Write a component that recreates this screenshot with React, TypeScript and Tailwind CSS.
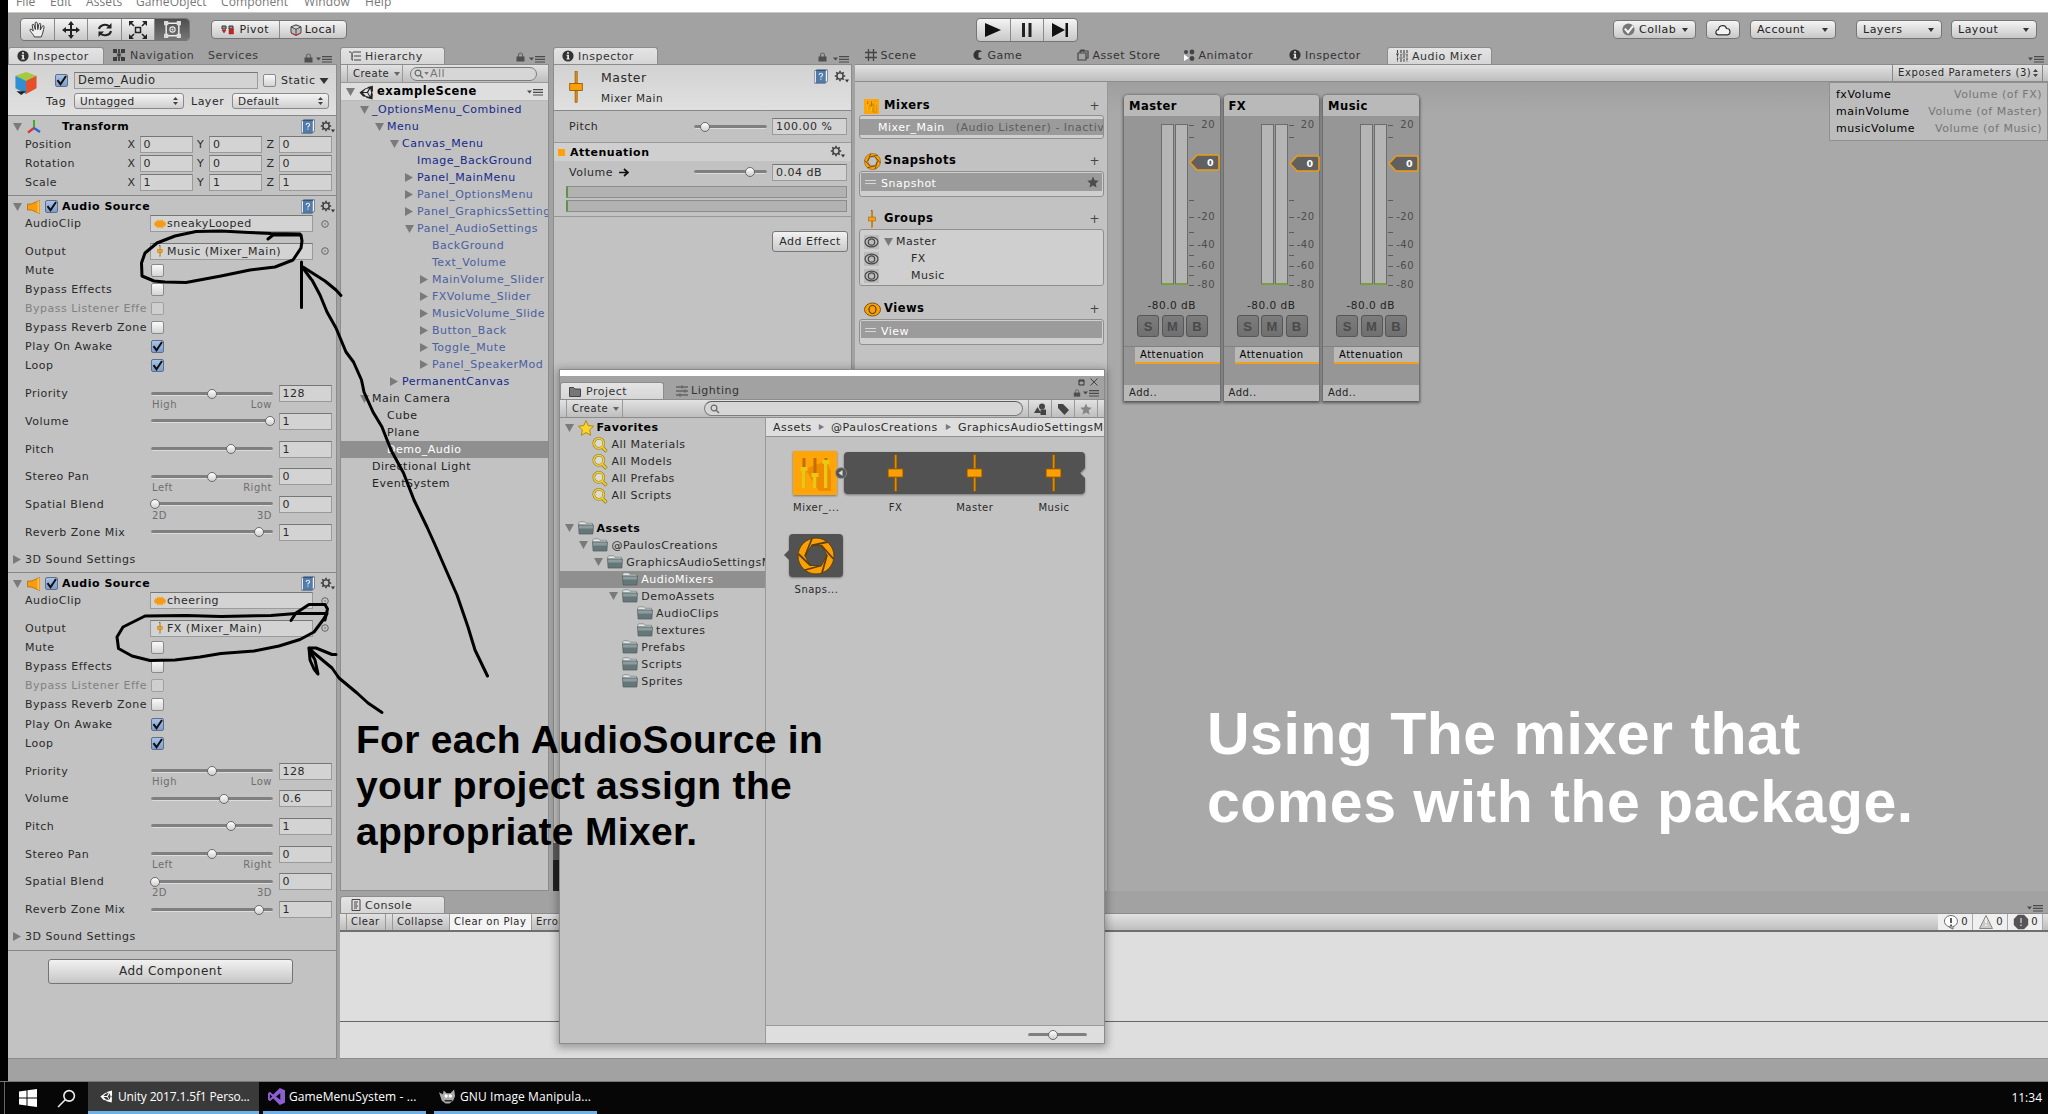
import React from 'react';

type Kids = { children?: React.ReactNode; className?: string };

/* ---------- small shared pieces ---------- */

const Down = ({ className = '' }: { className?: string }) => (
  <svg viewBox="0 0 9 8" className={`h-2 w-[9px] shrink-0 fill-[#7a7a7a] ${className}`}><path d="M0 0h9L4.500 8z" /></svg>
);
const Right = ({ className = '' }: { className?: string }) => (
  <svg viewBox="0 0 8 9" className={`h-[9px] w-2 shrink-0 fill-[#7a7a7a] ${className}`}><path d="M0 0v9l8-4.500z" /></svg>
);
const Caret = ({ className = '' }: { className?: string }) => (
  <svg viewBox="0 0 6 4" className={`h-1 w-1.5 shrink-0 fill-[#333] ${className}`}><path d="M0 0h6L3 4z" /></svg>
);
const UpDown = ({ className = '' }: { className?: string }) => (
  <svg viewBox="0 0 5 8" className={`h-2 w-[5px] shrink-0 fill-[#444] ${className}`}><path d="M0 3h5L2.500 0zM0 5h5L2.500 8z" /></svg>
);
const PaneMenu = ({ className = '' }: { className?: string }) => (
  <svg viewBox="0 0 16 7" className={`h-[7px] w-4 shrink-0 fill-[#4a4a4a] ${className}`}>
    <path d="M0 1.500h5L2.500 4.500zM6 0h10v1.200H6zM6 2.700h10v1.200H6zM6 5.400h10v1.200H6z" />
  </svg>
);
const Lock = ({ className = '' }: { className?: string }) => (
  <svg viewBox="0 0 9 10" className={`h-2.5 w-[9px] shrink-0 ${className}`}>
    <path d="M2.500 5V3a2 2 0 0 1 4 0v2" fill="none" stroke="#666" strokeWidth="1.200" />
    <rect x=".5" y="4.500" width="8" height="5" fill="#4f4f4f" />
  </svg>
);
const Info = ({ className = '' }: { className?: string }) => (
  <svg viewBox="0 0 12 12" className={`size-3 shrink-0 ${className}`}>
    <circle cx="6" cy="6" r="5.600" fill="#333" />
    <path d="M5 2.200h2v1.600H5zM4.500 4.800H7v3.700h.7v1H4.400v-1h.8V5.800h-.7z" fill="#e8e8e8" />
  </svg>
);
const Gear = ({ className = '' }: { className?: string }) => (
  <svg viewBox="0 0 15 14" className={`h-3.5 w-[15px] shrink-0 ${className}`}>
    <circle cx="6" cy="6" r="3.100" fill="none" stroke="#3c3c3c" strokeWidth="1.400" />
    <path d="M6 .8v2M6 9.200v2M.8 6h2M9.200 6h2M2.300 2.300l1.300 1.300M8.400 8.400l1.300 1.300M9.700 2.300L8.400 3.600M2.300 9.700l1.300-1.300" stroke="#3c3c3c" strokeWidth="1.600" />
    <path d="M11 9.500h4l-2 3z" fill="#333" />
  </svg>
);
const Book = ({ className = '' }: { className?: string }) => (
  <svg viewBox="0 0 14 15" className={`h-[15px] w-3.5 shrink-0 ${className}`}>
    <path d="M.5 1.500L3 .5h10.500v12L11 14.500H.5z" fill="#2e4a70" />
    <path d="M11.500 2l1.500-1v11l-1.500 1.500z" fill="#f2f4f7" />
    <path d="M.8 1.700h1.400v12H.8z" fill="#e3e9f0" />
    <path d="M2.200 1.800h9.100v12H2.200z" fill="#547cab" />
    <path d="M5.200 6c0-2.200 3.400-2.200 3.400-.3 0 1.400-1.700 1.300-1.700 2.700M6.900 9.400v1.300" fill="none" stroke="#e4ecf6" strokeWidth="1.100" />
  </svg>
);
const Fader = ({ className = '' }: { className?: string }) => (
  <svg viewBox="0 0 14 32" className={`shrink-0 ${className}`}>
    <rect x="6" y=".5" width="2.200" height="31" fill="#e08c00" stroke="#7a4a00" strokeWidth=".5" />
    <rect x=".7" y="12.500" width="12.600" height="7" fill="#fa9f05" stroke="#8a5200" strokeWidth=".8" />
  </svg>
);
const Folder = ({ className = '' }: { className?: string }) => (
  <svg viewBox="0 0 16 14" className={`h-3.5 w-4 shrink-0 ${className}`}>
    <path d="M.7 4V1.800L2 .8h4.500L8 2.300h6.500v2z" fill="#e2e6e6" stroke="#6d7878" strokeWidth=".7" />
    <path d="M.6 4h14.800l-.5 9H1.100z" fill="#66777a" stroke="#4c5a5c" strokeWidth=".7" />
    <path d="M1 4.500h14l-.2 3H1.200z" fill="#8d9c9e" />
  </svg>
);
const Aperture = ({ className = '', open = '#c2c2c2' }: { className?: string; open?: string }) => (
  <svg viewBox="0 0 38 38" className={`shrink-0 ${className}`}>
    <circle cx="19" cy="19" r="18" fill="#fa9f05" stroke="#5e4010" strokeWidth="1" />
    <path d="M14.500 8.500h10L30 18l-5.500 10.500h-11L8 19z" fill={open} stroke="#5e4010" strokeWidth="1" />
    <path d="M14.500 8.500L30.500 5M24.500 8.500L36.500 22M30 18l-5 18M24.500 28.500L8 33M13.500 28.500L1.500 17M8 19L15 1.500" stroke="#5e4010" strokeWidth="1.800" fill="none" />
  </svg>
);
const MixerIcon = ({ className = '' }: { className?: string }) => (
  <svg viewBox="0 0 44 44" className={`shrink-0 ${className}`}>
    <rect width="44" height="44" fill="#ffa50a" />
    <path d="M12 18l14 22h12V20l-5-10z" fill="#ef8b00" />
    <g fill="#c26e00"><rect x="9.500" y="7" width="3" height="30" /><rect x="20.500" y="7" width="3" height="30" /><rect x="31.500" y="7" width="3" height="30" /></g>
    <g fill="#e9c713"><rect x="9" y="19" width="3.500" height="18" /><rect x="7.500" y="16" width="7" height="4" /><rect x="20" y="25" width="3.500" height="12" /><rect x="18.500" y="22" width="7" height="4" /><rect x="31" y="13" width="3.500" height="24" /><rect x="29.500" y="9" width="7" height="4" /></g>
  </svg>
);
const UnityLogo = ({ className = '', fill = '#222' }: { className?: string; fill?: string }) => (
  <svg viewBox="0 0 24 24" className={`shrink-0 ${className}`}>
    <path fill={fill} d="M10.400 17.200l-4.100-4.300h7l3.500 6.100-5.600-1.400zM6.300 11.100l4.100-4.300 5.800-1.500-3.500 5.800zM18 6.100l1.600 5.900L18 17.900 14.500 12zM22.200 1L14 3.200l-1.200 2.100H10.300L.7 12l6 6.300 3.700.5 2.400 2L21.600 23l.5-8.200L21 12l1.300-2.300z" />
  </svg>
);
const Star = ({ className = '' }: { className?: string }) => (
  <svg viewBox="0 0 16 16" className={`shrink-0 ${className}`}><path d="M8 .6l2.200 5 5.400.6-4 3.700 1.100 5.400L8 12.600l-4.700 2.700 1.100-5.400-4-3.700 5.400-.6z" /></svg>
);
const Glass = ({ className = '' }: { className?: string }) => (
  <svg viewBox="0 0 10 10" className={`size-2.5 shrink-0 ${className}`}>
    <circle cx="4" cy="4" r="2.900" fill="none" stroke="#6a6a6a" strokeWidth="1.200" /><path d="M6.200 6.200L9 9" stroke="#6a6a6a" strokeWidth="1.400" />
  </svg>
);
const YellowGlass = () => (
  <svg viewBox="0 0 16 16" className="size-4 shrink-0">
    <path d="M9.500 9.500l5 5" stroke="#8c7a20" strokeWidth="3.200" /><circle cx="6.800" cy="6.300" r="5" fill="#dcdcd2" stroke="#8c7a20" strokeWidth="2.600" />
    <path d="M9.700 9.700l4.500 4.500" stroke="#f3cf34" strokeWidth="1.900" /><circle cx="6.800" cy="6.300" r="5" fill="none" stroke="#f3cf34" strokeWidth="1.600" />
  </svg>
);
const Speaker = () => (
  <svg viewBox="0 0 14 14" className="h-3.5 w-3.5 shrink-0"><path d="M.5 4h4L12.500.5v13L4.500 10h-4z" fill="#fb9c0a" stroke="#a86408" strokeWidth=".7" /><path d="M10.500 1.500l2-1v13l-2-1z" fill="#ffc14d" /></svg>
);

const Field = ({ children, className = '' }: Kids) => (
  <div className={`flex h-[17px] shrink-0 items-center overflow-hidden border border-[#9a9a9a] border-t-[#767676] bg-[#d3d3d3] pl-[3px] ${className}`}>{children}</div>
);
const Check = ({ on, dim, className = '' }: { on?: boolean; dim?: boolean; className?: string }) => (
  <span
    className={`relative size-[13px] shrink-0 rounded-[2px] border ${
      on ? 'border-[#5f6f8a] bg-linear-to-b from-[#a9c1e4] to-[#7d9fd0]' : dim ? 'border-[#a0a0a0] bg-[#cfcfcf]' : 'border-[#8a8a8a] bg-linear-to-b from-[#fafafa] to-[#d4d4d4]'
    } ${className}`}
  >
    {on && (
      <svg viewBox="0 0 13 13" className="absolute -top-px -left-px size-[13px]"><path d="M2.500 6.200l3 4L11 2" fill="none" stroke="#111" strokeWidth="2" /></svg>
    )}
  </span>
);
const Slider = ({ at, className = '' }: { at: number; className?: string }) => (
  <div className={`relative h-1 shrink-0 rounded-full border-b border-[#dcdcdc] bg-[#7f7f7f] ${className}`}>
    <span className="absolute -top-[3px] size-[10px] -translate-x-1/2 rounded-full border border-[#6b6b6b] bg-linear-to-b from-white to-[#cfcfcf]" style={{ left: at }} />
  </div>
);
const Tab = ({ children, className = '' }: Kids) => (
  <div className={`mt-px flex h-[17px] shrink-0 items-center rounded-t-[3px] border border-b-0 border-[#8c8c8c] bg-linear-to-b from-[#e4e4e4] to-[#d6d6d6] text-[#333] ${className}`}>{children}</div>
);
const bar = 'bg-linear-to-b from-[#e2e2e2] to-[#bebebe]';

/* ---------- inspector ---------- */

const CompHead = ({ icon, name, on }: { icon: React.ReactNode; name: string; on?: boolean }) => (
  <div className="flex h-[19px] items-center pt-[2px] pl-[5px]">
    <Down />
    <span className="ml-[5px] flex w-[18px]">{icon}</span>
    <span className="flex w-[17px]">{on && <Check on />}</span>
    <b className="w-[239px] text-black">{name}</b>
    <Book />
    <Gear className="ml-[5px]" />
  </div>
);

const Pick = ({ label, value, kind }: { label: string; value: string; kind: 'clip' | 'group' }) => (
  <div className="flex h-[17px] items-center pl-[17px]">
    <span className="w-[125px]">{label}</span>
    <Field className="w-[162.500px]">
      {kind === 'clip' ? (
        <svg viewBox="0 0 12 10" className="mr-[1px] h-2.5 w-3"><path d="M0 5l1.500-3 1 1 1-2.500L5 2l1-1.500L7 2l1.500-1.500 1 2.500 1-1L12 5l-1.500 3-1-1-1 2.500L7 8 6 9.500 5 8 3.500 9.500l-1-2.500-1 1z" fill="#f79a14" /></svg>
      ) : (
        <Fader className="mr-[1px] h-3 w-3" />
      )}
      {value}
    </Field>
    <svg viewBox="0 0 8 8" className="ml-2 size-2"><circle cx="4" cy="4" r="3.300" fill="none" stroke="#666" /><circle cx="4" cy="4" r=".8" fill="#666" /></svg>
  </div>
);

const Tick = ({ label, on, dim }: { label: string; on?: boolean; dim?: boolean }) => (
  <div className="flex h-[19.150px] items-center pl-[17px]">
    <span className={`w-[126px] overflow-hidden leading-[15px] whitespace-nowrap ${dim ? 'text-[#818181]' : ''}`}>{label}</span>
    <Check on={on} dim={dim} />
  </div>
);

const Range = ({ label, at, value, lo, hi }: { label: string; at: number; value: string; lo?: string; hi?: string }) => (
  <div className="relative flex h-[27.700px] items-center pl-[17px]">
    <span className="w-[125.500px]">{label}</span>
    <Slider at={at} className="w-[122px]" />
    <Field className="ml-[6px] w-[53.500px]">{value}</Field>
    {lo && (
      <div className="absolute top-[20px] left-[144px] flex w-[120px] justify-between text-[10px] leading-[10px] text-[#6e6e6e]">
        <span>{lo}</span>
        <span>{hi}</span>
      </div>
    )}
  </div>
);

const AudioSource = ({ clip, output, volume, at }: { clip: string; output: string; volume: string; at: number }) => (
  <section className="h-[377.400px] border-b border-[#868686]">
    <CompHead name="Audio Source" icon={<Speaker />} on />
    <Pick label="AudioClip" value={clip} kind="clip" />
    <div className="h-[10.500px]" />
    <Pick label="Output" value={output} kind="group" />
    <div className="h-px" />
    <Tick label="Mute" />
    <Tick label="Bypass Effects" />
    <Tick label="Bypass Listener Effe" dim />
    <Tick label="Bypass Reverb Zone" />
    <Tick label="Play On Awake" on />
    <Tick label="Loop" on />
    <div className="h-[4.500px]" />
    <Range label="Priority" at={61} value="128" lo="High" hi="Low" />
    <Range label="Volume" at={at} value={volume} />
    <Range label="Pitch" at={80.5} value="1" />
    <Range label="Stereo Pan" at={61} value="0" lo="Left" hi="Right" />
    <Range label="Spatial Blend" at={4} value="0" lo="2D" hi="3D" />
    <Range label="Reverb Zone Mix" at={108} value="1" />
    <div className="flex h-[27px] items-center pl-[5px]">
      <Right className="mr-1" />
      3D Sound Settings
    </div>
  </section>
);

const Vec = ({ label, v }: { label: string; v: string }) => (
  <div className="flex h-[19.150px] items-center pl-[17px]">
    <span className="w-[103px]">{label}</span>
    {['X', 'Y', 'Z'].map((a) => (
      <React.Fragment key={a}>
        <span className="w-3 shrink-0">{a}</span>
        <Field className="mr-[4.500px] w-[53px]">{v}</Field>
      </React.Fragment>
    ))}
  </div>
);

const Dropdown = ({ children, className = '' }: Kids) => (
  <div className={`flex h-4 items-center justify-between rounded-[3px] border border-[#8a8a8a] bg-linear-to-b from-[#f4f4f4] to-[#cfcfcf] px-[5px] text-[10.500px] tracking-[0.400px] ${className}`}>
    {children}
    <UpDown />
  </div>
);

const LeftInspector = () => (
  <aside className="flex w-[329px] shrink-0 flex-col">
    <div className="flex h-[18px] items-center">
      <Tab className="w-[96px] self-end pl-[8px]"><Info className="mr-[4px]" />Inspector</Tab>
      <svg viewBox="0 0 12 12" className="ml-[9px] size-3"><path d="M1 1l10 10M11 1L1 11M6 0v4M6 8v4" stroke="#3c3c3c" strokeWidth="1.800" strokeDasharray="4 1" /><path d="M0 0h4v4H0zM8 0h4v4H8zM0 8h4v4H0zM8 8h4v4H8z" fill="#3c3c3c" /></svg>
      <span className="ml-[5px] w-[78px] text-[#3a3a3a]">Navigation</span>
      <span className="w-[96px] text-[#3a3a3a]">Services</span>
      <Lock className="mt-[6px]" />
      <PaneMenu className="mt-2 ml-[3px]" />
    </div>
    <div className="flex flex-1 flex-col border border-l-0 border-[#8c8c8c] bg-[#c2c2c2]">
      <div className="flex h-[51px] border-b border-[#868686] bg-linear-to-b from-[#d2d2d2] to-[#e0e0e0]">
        <svg viewBox="0 0 24 24" className="mt-[7px] ml-[6px] h-[23px] w-6 shrink-0">
          <path d="M12 0l11 4-11 5L1 4z" fill="#a6c93f" /><path d="M1 4l11 5v14L1 17z" fill="#2f8fd0" /><path d="M23 4L12 9v14l11-6z" fill="#e5502b" /><path d="M2 20h10l-5 4z" fill="#222" />
        </svg>
        <div className="flex flex-col">
          <div className="mt-[7px] flex h-[17px] items-center pl-[17px]">
            <Check on className="mr-[6px]" />
            <Field className="w-[184px] text-[11.500px]">Demo_Audio</Field>
            <Check className="mx-[5px]" />
            Static
            <Caret className="ml-1 h-1.5! w-2.5!" />
          </div>
          <div className="mt-[4px] flex items-center pl-[8px]">
            <span className="w-[28px]">Tag</span>
            <Dropdown className="w-[110px]">Untagged</Dropdown>
            <span className="ml-[7px] w-[41px]">Layer</span>
            <Dropdown className="w-[97px]">Default</Dropdown>
          </div>
        </div>
      </div>
      <div className="h-[80px] border-b border-[#868686]">
        <CompHead
          name="Transform"
          icon={
            <svg viewBox="0 0 14 14" className="size-3.5"><path d="M7 8V0" stroke="#3fae2a" strokeWidth="2" /><path d="M7 8l-6 4.500" stroke="#d33" strokeWidth="2.200" /><path d="M7 8l6 4" stroke="#2a62d8" strokeWidth="2.200" /></svg>
          }
        />
        <Vec label="Position" v="0" />
        <Vec label="Rotation" v="0" />
        <Vec label="Scale" v="1" />
      </div>
      <AudioSource clip="sneakyLooped" output="Music (Mixer_Main)" volume="1" at={119} />
      <AudioSource clip="cheering" output="FX (Mixer_Main)" volume="0.6" at={73} />
      <button className="mt-2 ml-[40px] h-[25px] w-[245px] rounded-[3px] border border-[#747474] bg-linear-to-b from-[#f2f2f2] to-[#c6c6c6] text-[12px]">Add Component</button>
    </div>
  </aside>
);

/* ---------- hierarchy ---------- */

type Node = [string, number, ('d' | 'r' | '')?, ('b' | 'f' | 's' | 'k')?];
const nodes: Node[] = [
  ['_OptionsMenu_Combined', 0, 'd', 'b'],
  ['Menu', 1, 'd', 'b'],
  ['Canvas_Menu', 2, 'd', 'b'],
  ['Image_BackGround', 3, '', 'b'],
  ['Panel_MainMenu', 3, 'r', 'b'],
  ['Panel_OptionsMenu', 3, 'r', 'f'],
  ['Panel_GraphicsSettings', 3, 'r', 'f'],
  ['Panel_AudioSettings', 3, 'd', 'f'],
  ['BackGround', 4, '', 'f'],
  ['Text_Volume', 4, '', 'f'],
  ['MainVolume_Slider', 4, 'r', 'f'],
  ['FXVolume_Slider', 4, 'r', 'f'],
  ['MusicVolume_Slide', 4, 'r', 'f'],
  ['Button_Back', 4, 'r', 'f'],
  ['Toggle_Mute', 4, 'r', 'f'],
  ['Panel_SpeakerMod', 4, 'r', 'f'],
  ['PermanentCanvas', 2, 'r', 'b'],
  ['Main Camera', 0, 'd', 'k'],
  ['Cube', 1, '', 'k'],
  ['Plane', 1, '', 'k'],
  ['Demo_Audio', 1, '', 's'],
  ['Directional Light', 0, '', 'k'],
  ['EventSystem', 0, '', 'k'],
];
const tone = { b: 'text-[#15298c]', f: 'text-[#4a609f]', s: 'bg-[#8f8f8f] text-white', k: 'text-[#222]' };

const Hierarchy = () => (
  <section className="flex w-[209px] shrink-0 flex-col">
    <div className="flex h-[18px] items-center">
      <Tab className="mr-[71px] w-[105px] self-end pl-[8px]">
        <svg viewBox="0 0 12 10" className="mr-1 h-2.5 w-3"><path d="M0 1h2M4 1h8M5 5h7M5 9h7M3 1v8M3 5h1M3 9h1" stroke="#444" strokeWidth="1.200" /></svg>
        Hierarchy
      </Tab>
      <Lock className="mt-[4px]" />
      <PaneMenu className="mt-[9px] ml-[4px]" />
    </div>
    <div className="flex flex-1 flex-col overflow-hidden border border-[#8c8c8c] bg-[#c2c2c2]">
      <div className={`flex h-[18px] shrink-0 items-center border-b border-[#999] ${bar}`}>
        <div className="ml-[6px] flex h-full w-[56px] items-center border-x border-[#999] pl-[5px] text-[10px]">Create<Caret className="ml-[5px] fill-[#666]!" /></div>
        <div className="ml-[7px] flex h-[14px] w-[127px] items-center rounded-full border border-[#7d7d7d] bg-[#d6d6d6] pl-[3px] text-[#777]"><Glass /><Caret className="mr-px h-[3px]! w-[5px]! fill-[#777]!" />All</div>
      </div>
      <div className="flex h-[18px] shrink-0 items-center border-b border-[#bbb] bg-[#dedede] pt-px pl-[5px]">
        <Down />
        <UnityLogo className="ml-1 size-[15px]" />
        <b className="ml-[3px] w-[150px] text-[11.500px] text-black">exampleScene</b>
        <PaneMenu />
      </div>
      {nodes.map(([name, lv, arrow, c = 'k']) => (
        <div key={name} className={`flex h-[17.020px] shrink-0 items-center whitespace-nowrap ${tone[c]}`} style={{ paddingLeft: 19 + lv * 15 }}>
          <span className="w-3 shrink-0">{arrow === 'd' ? <Down /> : arrow === 'r' ? <Right /> : null}</span>
          {name}
        </div>
      ))}
    </div>
  </section>
);

/* ---------- mixer group inspector ---------- */

const meter = 'ml-3 h-[12px] w-[281px] shrink-0 border border-[#8c8c8c] border-l-2 border-l-[#5f9448] bg-[#b2b2b2]';

const GroupInspector = () => (
  <section className="ml-[4px] flex w-[299px] shrink-0 flex-col">
    <div className="flex h-[18px] items-center">
      <Tab className="mr-[160px] w-[105px] self-end pl-[8px]"><Info className="mr-[4px]" />Inspector</Tab>
      <Lock className="mt-[4px]" />
      <PaneMenu className="mt-[9px] ml-[6px]" />
    </div>
    <div className="flex flex-1 flex-col border border-[#8c8c8c] bg-[#c2c2c2]">
      <div className="flex h-[46px] border-b border-[#868686] bg-linear-to-b from-[#d2d2d2] to-[#e0e0e0] pl-[15px]">
        <Fader className="mt-[6px] h-8 w-3.5" />
        <div className="mt-[5px] ml-[18px] flex w-[213px] flex-col">
          <span className="text-[12.500px] leading-[15px]">Master</span>
          <span className="mt-[7px] text-[10.500px] leading-[13px]">Mixer Main</span>
        </div>
        <Book className="mt-[4px]" />
        <Gear className="mt-[5px] ml-[6px]" />
      </div>
      <div className="flex h-[31px] items-center pl-[15px]">
        <span className="w-[125px]">Pitch</span>
        <Slider at={10.5} className="w-[73px]" />
        <Field className="ml-[5px] w-[75px]">100.00 %</Field>
      </div>
      <div className="flex h-[19px] items-center border-t border-[#999] bg-[#cfcfcf] pl-[4px]">
        <span className="mr-[5px] size-[7px] bg-[#ffa10a]" />
        <b className="w-[260px] text-black">Attenuation</b>
        <Gear />
      </div>
      <div className="flex h-[21px] items-center pt-px pl-[15px]">
        <span className="flex w-[125px] items-center">
          Volume
          <svg viewBox="0 0 10 9" className="ml-1.5 h-[9px] w-2.5"><path d="M0 4.500h8M5 1l4 3.500L5 8" fill="none" stroke="#111" strokeWidth="1.700" /></svg>
        </span>
        <Slider at={56} className="w-[73px]" />
        <Field className="ml-[5px] w-[75px]">0.04 dB</Field>
      </div>
      <div className={`${meter} mt-[4px]`} />
      <div className={`${meter} mt-[2px]`} />
      <div className="mt-[4px] h-px bg-[#979797]" />
      <button className="mt-[14px] ml-[218px] h-[21px] w-[76px] rounded-[3px] border border-[#777] bg-linear-to-b from-[#f2f2f2] to-[#c9c9c9]">Add Effect</button>
    </div>
  </section>
);

/* ---------- audio mixer ---------- */

const ListHead = ({ icon, name, className = '' }: { icon: React.ReactNode; name: string; className?: string }) => (
  <div className={`flex h-[20px] items-center pt-[2px] pl-[6px] ${className}`}>
    <span className="flex w-5 items-center justify-start">{icon}</span>
    <b className="w-[205.500px] text-[11.500px] text-black">{name}</b>
    <span className="text-[12px] text-[#444]">+</span>
  </div>
);
const Eye = ({ className = '', c = '#444' }: { className?: string; c?: string }) => (
  <svg viewBox="0 0 15 13" className={`shrink-0 ${className}`}>
    <ellipse cx="7.500" cy="6.500" rx="6.500" ry="4.800" fill="none" stroke={c} strokeWidth="1.200" /><ellipse cx="7.500" cy="6.500" rx="3.200" ry="3.200" fill="none" stroke={c} strokeWidth="1.200" />
  </svg>
);
const box = 'ml-px w-[245px] rounded-[3px] border border-[#8f8f8f] bg-[#cfcfcf]';
const Handle = () => <span className="mr-[5px] h-1 w-[11px] border-y border-[#d6d6d6]" />;

const MixerLists = () => (
  <div className="w-[253px] shrink-0 overflow-hidden border-r border-[#999] bg-[#c2c2c2] pl-[3px]">
    <ListHead className="mt-[13px]" name="Mixers" icon={<MixerIcon className="size-[15px]" />} />
    <div className={`${box} h-[24px] pt-[3px]`}>
      <div className="flex h-[16px] items-center overflow-hidden bg-[#9b9b9b] pl-[18px] whitespace-nowrap text-white">
        Mixer_Main<span className="ml-[11px] text-[#5d5d5d]">(Audio Listener) - Inactive</span>
      </div>
    </div>
    <ListHead className="mt-[11px]" name="Snapshots" icon={<Aperture className="size-[17px]" />} />
    <div className={`${box} mt-[1px] h-[26px] p-[1px]`}>
      <div className="flex h-[18px] items-center bg-[#9b9b9b] pl-[4px] text-white">
        <Handle /><span className="w-[206px] pt-[3px]">Snapshot</span><Star className="size-3 fill-[#4d4d4d]" />
      </div>
    </div>
    <ListHead className="mt-[11px]" name="Groups" icon={<Fader className="ml-[2px] h-[18px] w-3" />} />
    <div className={`${box} mt-[1px] h-[57px] pt-[3px]`}>
      {['Master', 'FX', 'Music'].map((g, i) => (
        <div key={g} className="flex h-[17px] items-center pl-[4px]">
          <Eye className="h-[14px] w-[15px] bg-[#bcbcbc]" />
          {i === 0 ? <Down className="mr-[3px] ml-[5px]" /> : <span className="w-8" />}
          {g}
        </div>
      ))}
    </div>
    <ListHead
      className="mt-[12px]"
      name="Views"
      icon={<svg viewBox="0 0 17 15" className="h-[15px] w-[17px]"><ellipse cx="8.500" cy="7.500" rx="8" ry="6.500" fill="#fa9f05" stroke="#7a5418" /><ellipse cx="8.500" cy="7.500" rx="3.500" ry="4" fill="none" stroke="#5e4010" strokeWidth="1.200" /></svg>}
    />
    <div className={`${box} mt-[1px] h-[26px] p-[1px]`}>
      <div className="flex h-[17px] items-center bg-[#9b9b9b] pl-[4px] text-white"><Handle /><span className="pt-[3px]">View</span></div>
    </div>
  </div>
);

const scale: [number, string?][] = [[9, '20'], [21.5], [84], [101, '-20'], [116], [129, '-40'], [139], [150, '-60'], [159.5], [169, '-80']];

const Strip = ({ name, arrow }: { name: string; arrow: number }) => (
  <div className="h-[306px] w-[95.500px] rounded-t-[4px] bg-[#969696] shadow-[0_1px_3px_1px_rgba(0,0,0,0.5)]">
    <div className="flex h-[21px] items-center rounded-t-[4px] bg-[#b9b9b9] pt-[2px] pl-[5px]"><b className="text-[11.500px] text-black">{name}</b></div>
    <div className="relative h-[179px]">
      <div className="flex gap-[1px] pt-[8px] pl-[37px]">
        {[0, 1].map((i) => (
          <span key={i} className="h-[161px] w-[13px] border border-[#6c6c6c] border-b-2 border-b-[#7aa03a] bg-[#b5b5b5]" />
        ))}
      </div>
      {scale.map(([y, t]) => (
        <div key={y} className="absolute left-[65px] flex h-0 w-[26px] items-center justify-between text-[10px] text-[#4c4c4c]" style={{ top: y }}>
          <span className="h-px w-[5px] shrink-0 bg-[#5c5c5c]" />
          {t}
        </div>
      ))}
      <svg viewBox="0 0 31 17" className="absolute left-[65px] h-[17px] w-[31px]" style={{ top: arrow }}>
        <path d="M1 8.500L8 1h20q2 0 2 2v11q0 2-2 2H8z" fill="#606060" stroke="#ec9a18" strokeWidth="1.600" />
      </svg>
      <b className="absolute left-[83px] text-[9.500px] leading-[17px] text-white" style={{ top: arrow }}>0</b>
    </div>
    <div className="-mt-px h-[20px] pt-[6px] text-center text-[10.500px] text-[#222]">-80.0 dB</div>
    <div className="mt-px flex gap-[2.500px] pl-[13px]">
      {['S', 'M', 'B'].map((k) => (
        <span key={k} className="flex size-[22px] items-center justify-center rounded-[3px] border border-[#565656] bg-linear-to-b from-[#7c7c7c] to-[#707070] font-['Liberation_Sans'] text-[13px] font-bold tracking-normal text-[#4a4a4a]">{k}</span>
      ))}
    </div>
    <div className="mt-[9px] h-[18px] border-t border-[#808080] pl-[11px]">
      <div className="flex h-[17px] items-center border-b-2 border-[#f0a01c] bg-[#b9b9b9] pl-[5px] text-[10px] text-black">Attenuation</div>
    </div>
    <div className="mt-[21px] flex h-[16px] items-center bg-[#b9b9b9] pl-[5px] text-[10px] text-[#222]">Add..</div>
  </div>
);

const tabs: [string, string, React.ReactNode][] = [
  ['Scene', 'ml-[10px] w-[107px]', <path key="a" d="M3.500 0v12M8.500 0v12M0 3.500h12M0 8.500h12" stroke="#444" strokeWidth="1.300" />],
  ['Game', 'w-[105px]', <path key="b" d="M10 2.500A5 5 0 1 0 10 9.500L6.500 8.500v-5z" fill="#333" />],
  ['Asset Store', 'w-[106px]', <path key="c" d="M1 4h8v7H1zM3 4V2h8v7H9M4 3V1h3v2" fill="none" stroke="#444" strokeWidth="1.200" />],
  ['Animator', 'w-[106px]', <g key="d"><g fill="#444"><circle cx="3" cy="3" r="2" /><circle cx="9" cy="3" r="2.400" /><circle cx="9" cy="9.500" r="2.400" /></g><path d="M1 5.500l5 3.500-5 3z" fill="#fff" /></g>],
];

const AudioMixer = () => (
  <section className="relative flex min-w-0 flex-1 flex-col">
    <div className="flex h-[18px] items-center text-[#333]">
      {tabs.map(([t, w, g]) => (
        <div key={t} className={`flex shrink-0 items-center ${w}`}><svg viewBox="0 0 12 12" className="mr-[3.500px] size-3">{g}</svg>{t}</div>
      ))}
      <div className="flex w-[98px] items-center"><Info className="mr-1" />Inspector</div>
      <Tab className="mr-[536px] w-[105px] self-end pl-[8px]">
        <svg viewBox="0 0 12 12" className="mr-[4px] size-3"><path d="M1.500 0v12M5 0v7M5 9v3M8 0v3M8 5v7M11 0v12M0 4h3M3.500 8h3M6.500 4h3" stroke="#444" strokeWidth="1.100" strokeDasharray="3 .8" /></svg>
        Audio Mixer
      </Tab>
      <PaneMenu className="mt-[8px]" />
    </div>
    <div className={`flex h-[18px] shrink-0 justify-end border-y border-[#8c8c8c] pr-[5px] ${bar}`}>
      <div className="flex w-[151px] items-center justify-between border-x border-[#888] pr-[4px] pl-[5px] text-[10px] tracking-[0.600px] whitespace-nowrap">Exposed Parameters (3)<UpDown /></div>
    </div>
    <div className="flex flex-1">
      <MixerLists />
      <div className="flex flex-1 gap-[4px] bg-linear-to-b from-[#9f9f9f] to-[#a9a9a9] to-4% pt-[13px] pl-[16px]">
        <Strip name="Master" arrow={38} />
        <Strip name="FX" arrow={39} />
        <Strip name="Music" arrow={39} />
      </div>
    </div>
    <div className="absolute top-[36px] right-0 h-[59px] w-[219px] border border-[#8f8f8f] bg-[#bcbcbc] pt-[3px] pr-[5px] pl-[6px]">
      {[['fxVolume', 'Volume (of FX)'], ['mainVolume', 'Volume (of Master)'], ['musicVolume', 'Volume (of Music)']].map(([a, b]) => (
        <div key={a} className="flex h-[17px] items-center justify-between"><span className="text-black">{a}</span><span className="text-[#767676]">{b}</span></div>
      ))}
    </div>
  </section>
);

/* ---------- console ---------- */

const Console = () => (
  <section className="flex h-[164px] flex-col">
    <div className="flex h-[18px] items-center justify-between pr-[5px]">
      <Tab className="w-[105px] self-end pl-[10px]">
        <svg viewBox="0 0 10 12" className="mr-1 h-3 w-[10px]"><path d="M1 .5h8v11H1zM3 3h4M3 5h3M3 7h4M3 9h3" fill="none" stroke="#444" /></svg>
        Console
      </Tab>
      <PaneMenu className="mt-[8px]" />
    </div>
    <div className={`flex h-[19px] border-t border-b-2 border-[#8c8c8c] border-b-[#6f6f6f] pl-[6px] text-[10px] ${bar}`}>
      <span className="flex w-[40px] items-center border-x border-[#999] pl-[4px]">Clear</span>
      <span className="ml-[6px] flex w-[58px] items-center border-x border-[#999] pl-[4px]">Collapse</span>
      <span className="flex w-[81px] items-center bg-[#f4f4f4] pl-[4px]">Clear on Play</span>
      <span className="flex flex-1 items-center border-l border-[#999] pl-[4px]">Error Pause</span>
      <div className="mr-[5px] flex">
        {[0, 1, 2].map((i) => (
          <span key={i} className="flex w-[35px] items-center justify-between border-r border-[#aaa] bg-[#efefef] pr-[4px] pl-[5px]">
            <svg viewBox="0 0 16 16" className="size-4">
              {i === 0 && <path d="M8 1.500a6.500 5.700 0 1 1-.1 0M6 13l4 2v-2" fill="#fff" stroke="#666" />}
              {i === 1 && <path d="M8 1.500L14.500 14.500H1.500z" fill="#ccc" stroke="#888" />}
              {i === 2 && <path d="M5 .8h6L15.200 5v6L11 15.200H5L.8 11V5z" fill="#555" />}
              <path d="M8 4v5M8 10.500v1.500" stroke={i === 0 ? '#333' : i === 1 ? '#f6f6f6' : '#bbb'} strokeWidth="1.600" />
            </svg>
            0
          </span>
        ))}
      </div>
    </div>
    <div className="h-[90px] border-b border-[#666] bg-[#dedede]" />
    <div className="flex-1 border-b border-[#8c8c8c] bg-[#dedede]" />
  </section>
);

/* ---------- floating project window ---------- */

type TreeRow = { t: string; lv: number; open?: boolean; kind: 'star' | 'search' | 'folder'; sel?: boolean };
const favorites: TreeRow[] = [
  { t: 'Favorites', lv: 0, open: true, kind: 'star' },
  ...['All Materials', 'All Models', 'All Prefabs', 'All Scripts'].map((t) => ({ t, lv: 1, kind: 'search' as const })),
];
const assets: TreeRow[] = [
  { t: 'Assets', lv: 0, open: true, kind: 'folder' },
  { t: '@PaulosCreations', lv: 1, open: true, kind: 'folder' },
  { t: 'GraphicsAudioSettingsMenu', lv: 2, open: true, kind: 'folder' },
  { t: 'AudioMixers', lv: 3, kind: 'folder', sel: true },
  { t: 'DemoAssets', lv: 3, open: true, kind: 'folder' },
  { t: 'AudioClips', lv: 4, kind: 'folder' },
  { t: 'textures', lv: 4, kind: 'folder' },
  { t: 'Prefabs', lv: 3, kind: 'folder' },
  { t: 'Scripts', lv: 3, kind: 'folder' },
  { t: 'Sprites', lv: 3, kind: 'folder' },
];
const Tree = ({ rows }: { rows: TreeRow[] }) => (
  <>
    {rows.map((r) => (
      <div key={r.t} className={`flex h-[17px] items-center overflow-hidden whitespace-nowrap ${r.sel ? 'bg-[#8f8f8f] text-white' : ''}`} style={{ paddingLeft: 4.5 + r.lv * 14.9 }}>
        <span className="w-[13px] shrink-0">{r.open && <Down />}</span>
        {r.kind === 'star' ? <Star className="size-4 fill-[#fbd42c] stroke-[#b08a10]" /> : r.kind === 'search' ? <YellowGlass /> : <Folder />}
        {r.lv === 0 ? <b className="ml-[3px] text-black">{r.t}</b> : <span className="ml-[3px]">{r.t}</span>}
      </div>
    ))}
  </>
);

const Project = () => (
  <div className="absolute top-[369px] left-[559px] flex h-[675px] w-[546px] flex-col border border-[#8a8a8a] bg-[#a2a2a2] shadow-[0_2px_8px_2px_rgba(0,0,0,0.3)]">
    <div className="h-[6px] shrink-0 bg-white" />
    <div className="flex h-[23px] shrink-0 items-end">
      <Tab className="w-[104px] pl-[8px]">
        <svg viewBox="0 0 12 11" className="mr-[5px] h-[11px] w-3"><path d="M.5 10.500v-9h4L6 3h5.500v7.500z" fill="#777" stroke="#444" /></svg>
        Project
      </Tab>
      <span className="flex h-[17px] flex-1 items-center pl-3 text-[#333]">
        <svg viewBox="0 0 12 12" className="mr-[3px] size-3"><path d="M0 2h5M7 2h5M0 6h8M10 6h2M0 10h3M5 10h7M6 .5v3M9 4.500v3M4 8.500v3" stroke="#444" strokeWidth="1.200" /></svg>
        Lighting
      </span>
      <div className="mr-[5px] flex w-[26px] flex-col gap-[3px] pb-[2px]">
        <svg viewBox="0 0 26 8" className="h-2 w-[26px]"><path d="M6 2h5v5H6zM6 3h5" fill="none" stroke="#333" /><path d="M17.500.5l7 7M24.500.5l-7 7" stroke="#444" /></svg>
        <div className="flex items-end justify-between"><Lock className="h-2! w-2!" /><PaneMenu /></div>
      </div>
    </div>
    <div className={`flex h-[19px] shrink-0 items-center border-y border-[#8c8c8c] ${bar}`}>
      <div className="ml-[6px] flex h-full w-[57px] items-center border-x border-[#999] pl-[5px] text-[10px]">Create<Caret className="ml-[5px] fill-[#666]!" /></div>
      <div className="ml-[81px] flex h-[15px] w-[319px] items-center rounded-full border border-[#7d7d7d] border-t-[#5c5c5c] bg-[#d6d6d6] pl-[5px]"><Glass /></div>
      <div className="ml-[5px] flex h-full">
        <span className="flex w-[23px] items-center justify-center border-l border-[#999]"><svg viewBox="0 0 12 12" className="size-3 fill-[#444]"><circle cx="8" cy="3.500" r="3" /><path d="M0 10L3.500 4 7 10zM6.500 6.500H12V12H6.500z" /></svg></span>
        <span className="flex w-[23px] items-center justify-center border-l border-[#999]"><svg viewBox="0 0 12 12" className="size-3 fill-[#444]"><path d="M1 1h5l6 6-4.500 5-6.500-7z" /></svg></span>
        <span className="flex w-[24px] items-center justify-center border-x border-[#999]"><Star className="size-3 fill-[#868686]" /></span>
      </div>
    </div>
    <div className="flex min-h-0 flex-1">
      <div className="w-[206px] shrink-0 border-r border-[#999] bg-[#c2c2c2] pt-px">
        <Tree rows={favorites} />
        <div className="h-[15.500px]" />
        <Tree rows={assets} />
      </div>
      <div className="flex min-w-0 flex-1 flex-col bg-[#c2c2c2]">
        <div className="flex h-[19px] items-center overflow-hidden border-b border-[#8f8f8f] bg-[#dedede] pl-[7px] whitespace-nowrap">
          <span className="w-[45px] shrink-0">Assets</span><Right className="mr-[6px] h-1.5! w-[7px]!" />
          <span className="w-[114px] shrink-0">@PaulosCreations</span><Right className="mr-[6px] h-1.5! w-[7px]!" />
          <span>GraphicsAudioSettingsMenu</span>
        </div>
        <div className="flex pt-[14px] pl-[27px] text-[10px]">
          <div className="relative w-[51px]">
            <MixerIcon className="size-[44px] shadow-[0_1px_2px_rgba(0,0,0,.4)]" />
            <svg viewBox="0 0 12 12" className="absolute top-[16px] left-[42px] z-10 size-3"><circle cx="6" cy="6" r="5.500" fill="#555" stroke="#999" strokeWidth=".7" /><path d="M7.500 3v6L3.500 6z" fill="#ddd" /></svg>
            <div className="mt-[8px] w-[44px] text-center">Mixer_...</div>
          </div>
          <div>
            <svg viewBox="0 0 242 44" className="h-[44px] w-[242px] drop-shadow-[0_1px_1px_rgba(0,0,0,.4)]"><path d="M4 1h233q4 0 4 4v12l-5 5 5 5v12q0 4-4 4H4q-4 0-4-4V5q0-4 4-4z" fill="#525252" /></svg>
            <div className="relative -mt-[41px] flex pl-[12px]">
              {['FX', 'Master', 'Music'].map((g) => (
                <div key={g} className="flex w-[79.200px] flex-col items-center"><Fader className="h-[38px] w-[17px]" /><span className="mt-[11px]">{g}</span></div>
              ))}
            </div>
          </div>
        </div>
        <div className="mt-[21px] ml-[17px] w-[60px] text-[10px]">
          <div className="relative ml-[6px] flex h-[43px] w-[54px] items-center justify-center rounded-[4px] bg-[#525252] shadow-[0_1px_2px_rgba(0,0,0,.4)]">
            <svg viewBox="0 0 5 10" className="absolute top-[16px] -left-[5px] h-2.5 w-[5px]"><path d="M5 0v10L0 5z" fill="#525252" /></svg>
            <Aperture className="size-[38px]" open="#525252" />
          </div>
          <div className="mt-[8px] pl-[7px] text-center">Snaps...</div>
        </div>
        <div className="mt-auto flex h-[18px] items-center justify-end border-t border-[#999] bg-[#dedede] pr-[17px]"><Slider at={25} className="w-[59px]" /></div>
      </div>
    </div>
  </div>
);

/* ---------- top toolbar ---------- */

const Seg = ({ children, className = '' }: Kids) => (
  <span className={`flex h-full items-center justify-center border-r border-[#8a8a8a] last:border-r-0 ${className}`}>{children}</span>
);
const btn = 'rounded-[4px] border border-[#757575] bg-linear-to-b from-[#f4f4f4] to-[#c8c8c8] overflow-hidden';

const Toolbar = () => (
  <div className="flex h-[33px] shrink-0 items-center pl-3 text-[#222]">
    <div className={`flex h-[23px] w-[170px] ${btn}`}>
      <Seg className="w-[34px]"><svg viewBox="0 0 16 16" className="size-[17px]"><path d="M5 15c-1-3-5-6-4-7s2 .5 3 1.500L3 4c0-1 1.500-1.300 1.800 0L6 8 5.800 2c0-1.300 1.700-1.300 2 0L8.300 8l1-5c.4-1.200 1.800-1 1.700.3L10.600 8.500 12.500 5c.6-1 2-.5 1.700.6C13.500 9 13 12 11.500 15z" fill="#eee" stroke="#333" strokeWidth=".9" /></svg></Seg>
      <Seg className="w-[34px]"><svg viewBox="0 0 18 18" className="size-[18px]"><path d="M9 2v14M2 9h14" stroke="#222" strokeWidth="2" /><path d="M9 0l3 4H6zM9 18l3-4H6zM0 9l4-3v6zM18 9l-4-3v6z" fill="#222" /></svg></Seg>
      <Seg className="w-[34px]"><svg viewBox="0 0 18 16" className="h-4 w-[18px]"><path d="M3 7a6 5 0 0 1 10.500-2.500M15 9A6 5 0 0 1 4.500 11.500" fill="none" stroke="#222" strokeWidth="2" /><path d="M15.500 1v5.500H10zM2.500 15V9.500H8z" fill="#222" /></svg></Seg>
      <Seg className="w-[34px]"><svg viewBox="0 0 18 18" className="size-[18px]"><path d="M6.500 6.500h5v5h-5z" fill="none" stroke="#222" strokeWidth="1.500" /><path d="M1 1l4 4M17 1l-4 4M1 17l4-4M17 17l-4-4" stroke="#222" strokeWidth="1.600" /><path d="M0 0h5L0 5zM18 0v5l-5-5zM0 18v-5l5 5zM18 18h-5l5-5z" fill="#222" /></svg></Seg>
      <Seg className="w-[34px] bg-linear-to-b from-[#4e4e4e] to-[#767676]"><svg viewBox="0 0 18 18" className="size-[19px]" fill="none" stroke="#eee"><path d="M3 3h12v12H3z" strokeWidth="1.400" /><circle cx="9" cy="9" r="2.500" /><g fill="#ddd" stroke="none"><circle cx="9" cy="9" r="1" /><path d="M1 1h4v4H1zM13 1h4v4h-4zM1 13h4v4H1zM13 13h4v4h-4z" /></g></svg></Seg>
    </div>
    <div className={`ml-[21px] flex h-[19px] w-[136px] ${btn}`}>
      <Seg className="w-[68px]"><svg viewBox="0 0 14 10" className="mr-1 h-2.5 w-3.5"><path d="M1 1h4v3H1zM8 1h4v3H8z" fill="#999" stroke="#333" /><path d="M1 5h4l-2 3zM8 4h4.500v5H8z" fill="#c22" stroke="#822" strokeWidth=".5" /></svg>Pivot</Seg>
      <Seg className="w-[67px]"><svg viewBox="0 0 12 12" className="mr-[3px] size-3"><path d="M6 .8l5 2v6l-5 2.500-5-2.500v-6zM1 2.800l5 2.400 5-2.400M6 5.200v6" fill="#bbb" stroke="#444" /><path d="M1 9l5 2.500L11 9" fill="none" stroke="#c33" /></svg>Local</Seg>
    </div>
    <div className={`ml-[629px] flex h-[24px] w-[102px] ${btn}`}>
      <Seg className="w-[34px]"><svg viewBox="0 0 16 14" className="h-3.5 w-4"><path d="M0 0l16 7L0 14z" fill="#111" /></svg></Seg>
      <Seg className="w-[34px]"><svg viewBox="0 0 10 14" className="h-3.5 w-2.5"><path d="M0 0h3v14H0zM6.500 0h3v14h-3z" fill="#222" /></svg></Seg>
      <Seg className="w-[33px]"><svg viewBox="0 0 17 14" className="h-3.5 w-[17px]"><path d="M0 0l13 7L0 14zM13.500 0h2.500v14h-2.500z" fill="#111" /></svg></Seg>
    </div>
    <div className={`ml-[535px] flex h-[19px] w-[83px] items-center pl-[8px] ${btn}`}>
      <svg viewBox="0 0 14 14" className="mr-1 size-[13px]"><circle cx="7" cy="7" r="6.500" fill="#777" /><path d="M3 6l3.500 4L12 3" fill="none" stroke="#f5f5f5" strokeWidth="2.200" /></svg>Collab<Caret className="ml-1.5" />
    </div>
    <div className={`ml-[10px] flex h-[19px] w-[34px] items-center justify-center ${btn}`}><svg viewBox="0 0 16 12" className="h-3 w-4"><path d="M3.500 10.800a2.600 2.600 0 0 1 0-5.200C4 .5 10.500.500 11.500 4.500a3.200 3.200 0 0 1 1 6.300z" fill="#f4f4f4" stroke="#333" strokeWidth="1.200" /></svg></div>
    {[['Account', 'ml-[10px]'], ['Layers', 'ml-[20px]'], ['Layout', 'ml-[9px]']].map(([t, m]) => (
      <div key={t} className={`${m} flex h-[19px] w-[86px] items-center justify-between pr-[7px] pl-[6px] ${btn}`}>{t}<Caret /></div>
    ))}
  </div>
);

/* ---------- taskbar ---------- */

const Taskbar = () => (
  <footer className="flex h-[33px] w-full shrink-0 items-stretch border-t border-[#777] bg-[#060606] pl-1 font-['Open_Sans'] text-[12px] tracking-[0px] text-white">
    <span className="w-px bg-[#666]" />
    <svg viewBox="0 0 18 18" className="ml-[14px] size-[18px] self-center"><path d="M0 2.500L7.500 1.500V8.500H0zM8.500 1.300L18 0v8.500H8.500zM0 9.500h7.500v7L0 15.500zM8.500 9.500H18V18l-9.500-1.300z" fill="#fff" /></svg>
    <svg viewBox="0 0 18 18" className="ml-5 size-[19px] self-center" fill="none" stroke="#eee" strokeWidth="1.500"><circle cx="11.500" cy="6.500" r="5" /><path d="M7.800 10.200L1 17" /></svg>
    <span className="ml-[12px] flex w-[171px] items-center border-b-[3px] border-[#6fb0ea] bg-[#3a3a3a] pl-3 tracking-[-0.150px]"><UnityLogo className="mr-[5px] size-[13px]" fill="#fff" />Unity 2017.1.5f1 Perso...</span>
    <span className="ml-[4px] flex w-[163px] items-center border-b-[3px] border-[#6fb0ea] pl-[5px] tracking-[0.100px]">
      <svg viewBox="0 0 18 18" className="mr-1 size-[17px]"><path d="M12.500 0L18 2.500v13L12.500 18 5.500 11 2 14l-2-1.500v-7L2 4l3.500 3zM13 5.500L8.500 9l4.500 3.500zM2 6.500v5L4.500 9z" fill="#8b5fd0" fillRule="evenodd" /></svg>
      GameMenuSystem - ...
    </span>
    <span className="ml-[8px] flex w-[163px] items-center border-b-[3px] border-[#6fb0ea] pl-[5px] tracking-[0.100px]">
      <svg viewBox="0 0 18 16" className="mr-1 h-4 w-[17px]"><path d="M0 3l4 2 1-4 3 3h4l4-4 1 7-2 5-4 3H7L3 12z" fill="#aaa" /><circle cx="7.500" cy="7" r="1.800" fill="#fff" /><circle cx="12" cy="7" r="1.800" fill="#fff" /><path d="M6 12h8" stroke="#222" strokeWidth="1.500" /></svg>
      GNU Image Manipula...
    </span>
    <span className="mr-[6px] ml-auto self-center">11:34</span>
  </footer>
);

/* ---------- hand-drawn annotations ---------- */

const strokes = [
  '268,239 273,235 301,235 302,241 301,248 293,260 275,267 250,270 221,276 186,282.500 165,282 154,281 142,276 141.500,263 145,253 157,243 175,236 196,231.500 221,231 249,232.500 271,233.500 300,234',
  '301.500,262 301.500,307.500',
  '303,267 314,274 325,281 336,290 341,295.500',
  '303,268 311,279 312,280 320,295 327,312 336,328 346,352 353.500,362 361.500,380 364,392 373,412 382,427 391,450 403.500,473 414,500 427,527 436,547 446,570 457,595 468,627 475,650 487.500,676',
  '291,620.500 296,613 309,604.500 325,604.500 327.500,609 325,620',
  '327,613.500 323,620 314,632 300,639.500 279,646 254,651 221,653.500 200,657 175,660 150,660.500 132,656 118.500,648.500 117,637 123,627 145,616 186,615.500 221,616.500 271,615.500 296,613.500 326,613.500',
  '382,712.500 368,703 357,693 339,678 332,668 314,653 309,648',
  '336,654.500 332,654.500 316,648 309,648 310,660 314,669 318,674 315,660 310,651',
];
const Scribbles = () => (
  <svg viewBox="0 0 560 720" className="pointer-events-none absolute top-0 left-0 h-[720px] w-[560px]">
    <g fill="none" stroke="#000" strokeWidth="3" strokeLinejoin="round" strokeLinecap="round">
      {strokes.map((p) => <polyline key={p} points={p} />)}
    </g>
  </svg>
);

export default function App() {
  return (
    <div className="relative flex h-[1114px] w-[2048px] flex-col overflow-hidden bg-[#a2a2a2] font-['DejaVu_Sans',sans-serif] text-[11px] leading-none tracking-[0.500px] text-[#2a2a2a]">
      <div className="flex h-[1081px] border-l-8 border-black">
        <div className="flex min-w-0 flex-1 flex-col">
          <nav className="flex h-[13px] shrink-0 overflow-hidden border-b border-[#c8c8c8] bg-white font-['Open_Sans'] text-[12px] tracking-[0.100px] text-[#777]">
            <div className="-mt-[4px] flex pl-[8px]">
              <span className="w-[34px]">File</span><span className="w-[36px]">Edit</span><span className="w-[50px]">Assets</span><span className="w-[85px]">GameObject</span><span className="w-[83px]">Component</span><span className="w-[61px]">Window</span><span>Help</span>
            </div>
          </nav>
          <Toolbar />
          <div className="flex min-h-0 flex-1">
            <LeftInspector />
            <div className="ml-[3px] flex min-w-0 flex-1 flex-col">
              <div className="flex h-[845px]">
                <Hierarchy />
                <GroupInspector />
                <div className="ml-[3px] flex min-w-0 flex-1"><AudioMixer /></div>
              </div>
              <div className="h-[4px]" />
              <Console />
            </div>
          </div>
          <div className="h-[22px] shrink-0" />
        </div>
      </div>
      <Taskbar />

      <div className="absolute top-[843px] left-[553px] h-[48px] w-[8px] border-t-[17px] border-[#5c5c5c] bg-[#222]" />
      <Project />
      <Scribbles />
      <p className="absolute top-[717px] left-[356px] font-['Liberation_Sans'] text-[39px] leading-[46px] font-bold tracking-[0.300px] whitespace-pre text-black">{'For each AudioSource in\nyour project assign the\nappropriate Mixer.'}</p>
      <p className="absolute top-[700px] left-[1207px] font-['Liberation_Sans'] text-[59px] leading-[68px] font-bold tracking-[0.500px] whitespace-pre text-white">{'Using The mixer that\ncomes with the package.'}</p>
    </div>
  );
}
